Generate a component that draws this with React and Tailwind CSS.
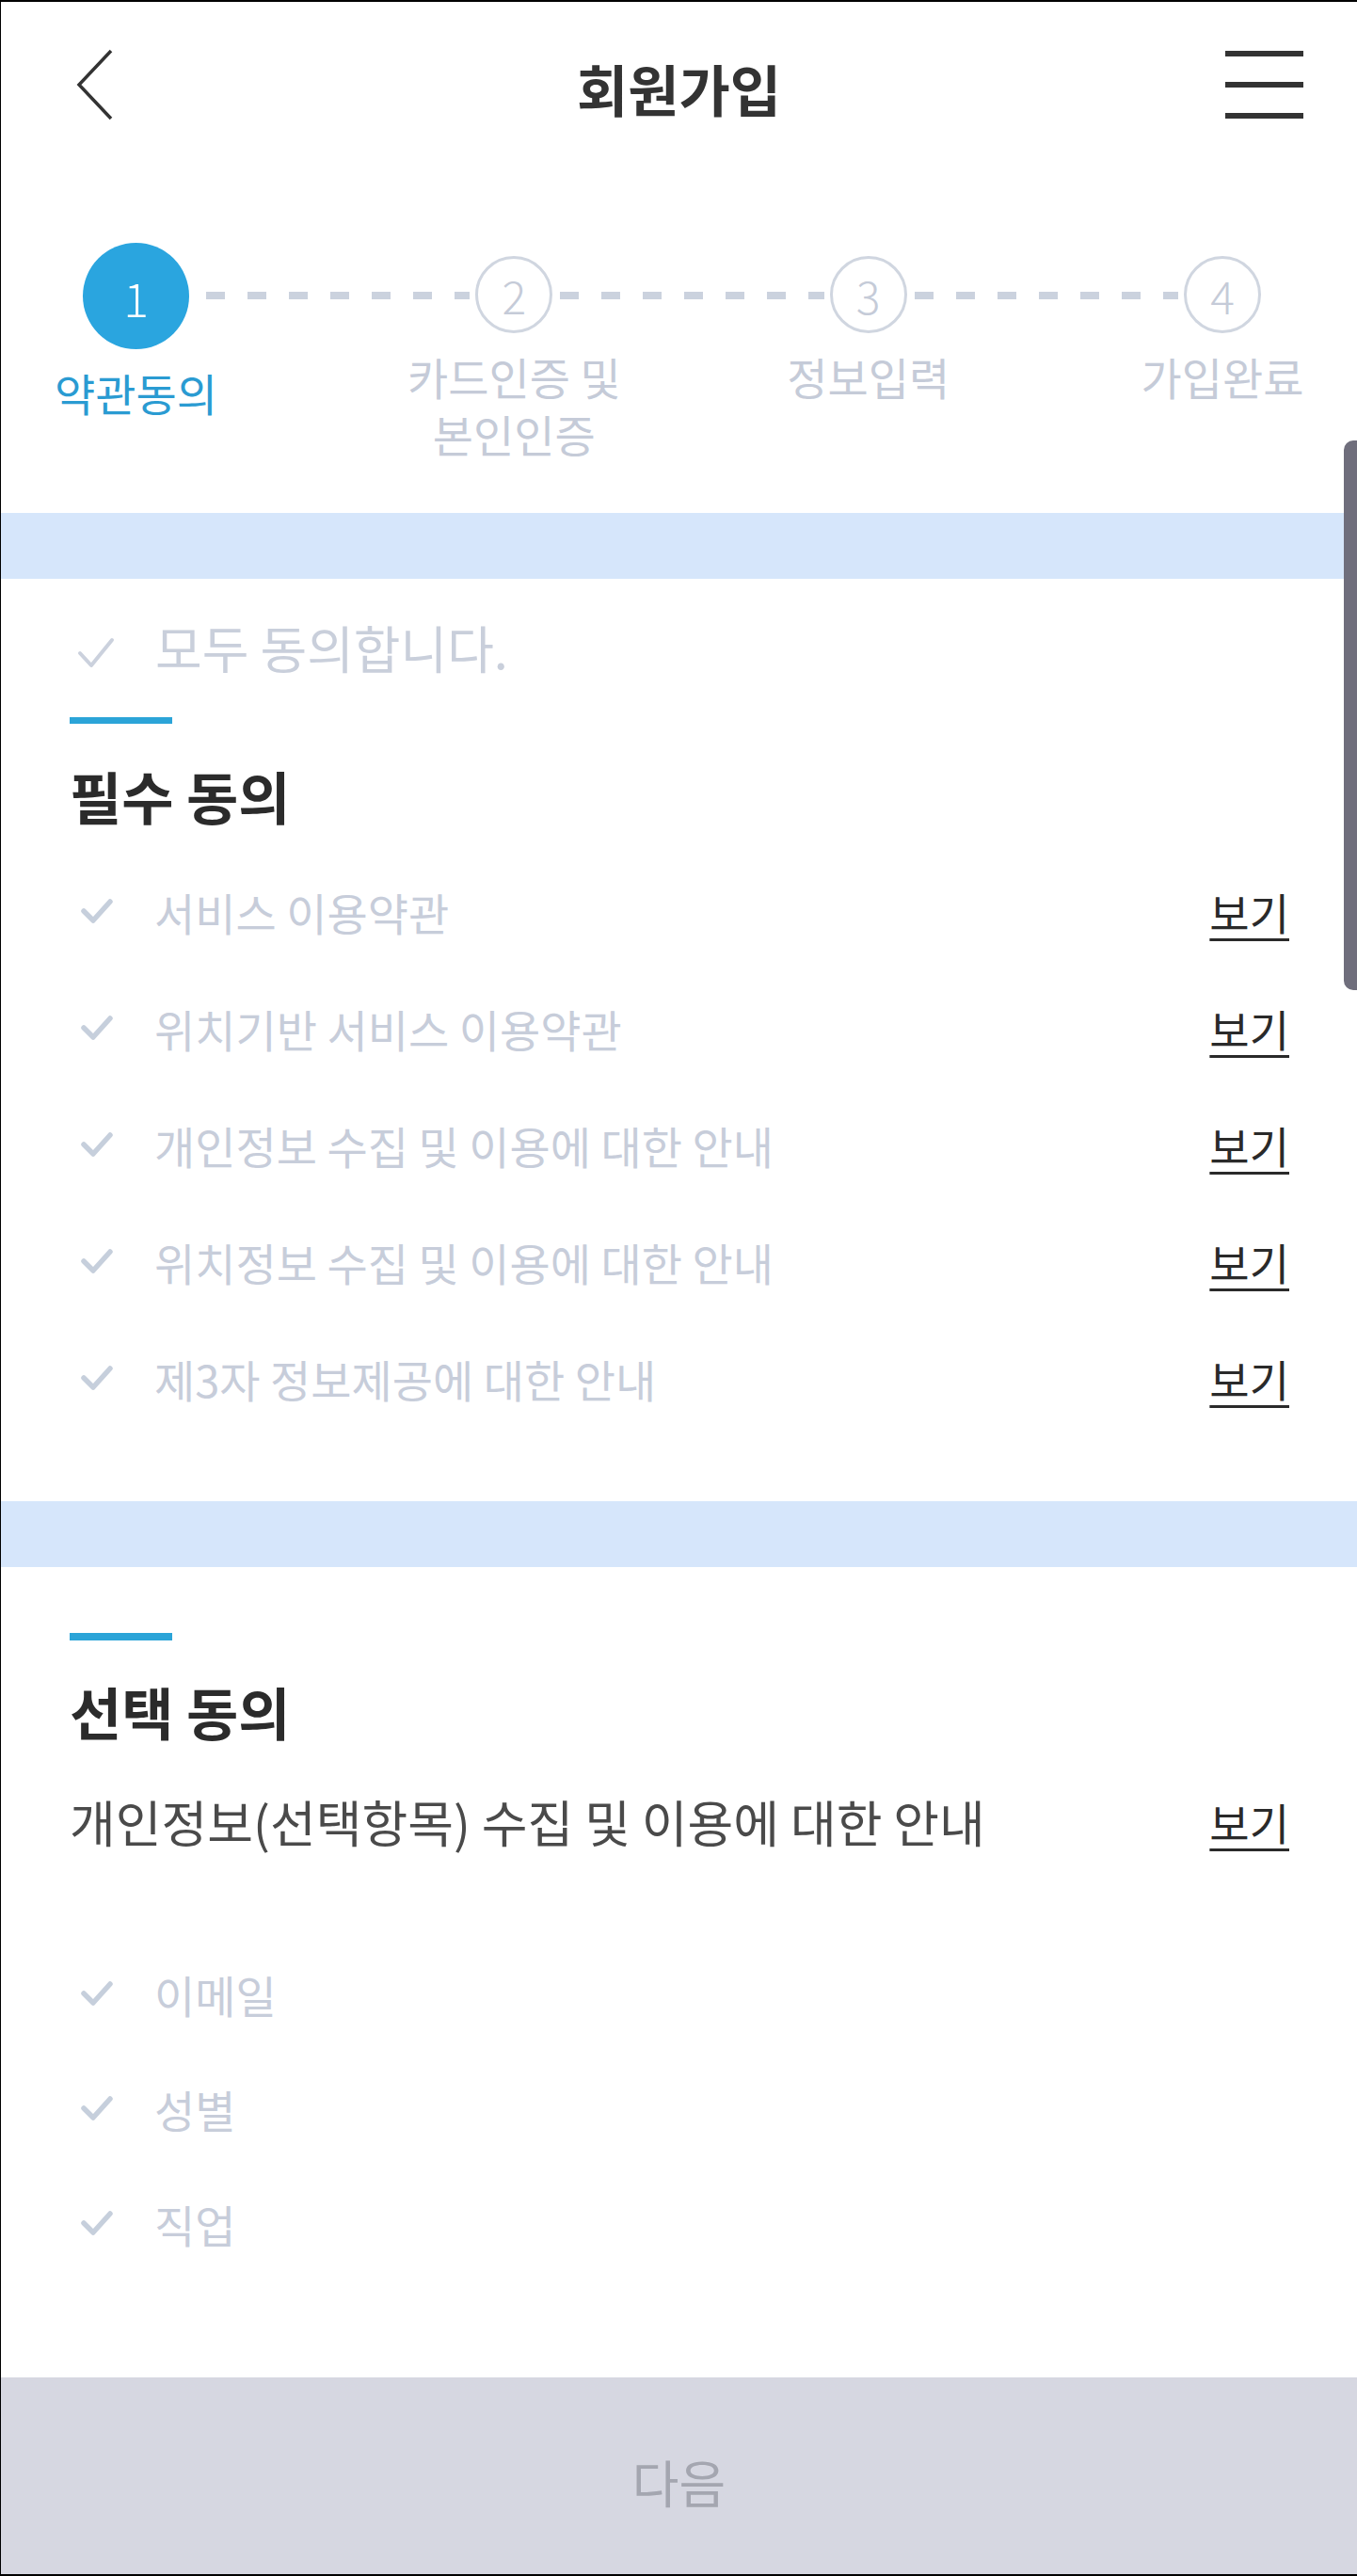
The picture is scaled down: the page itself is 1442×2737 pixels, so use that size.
const REQUIRED = [
  '서비스 이용약관',
  '위치기반 서비스 이용약관',
  '개인정보 수집 및 이용에 대한 안내',
  '위치정보 수집 및 이용에 대한 안내',
  '제3자 정보제공에 대한 안내',
]

const OPTIONAL = ['이메일', '성별', '직업']

const STEPS = [
  { num: '1', label: ['약관동의'] },
  { num: '2', label: ['카드인증 및', '본인인증'] },
  { num: '3', label: ['정보입력'] },
  { num: '4', label: ['가입완료'] },
]

export default function App() {
  return (
    <div
      className="relative flex h-[2737px] w-[1442px] flex-col overflow-hidden border-t-2 border-b-2 border-l border-black bg-white"
      style={{ fontFamily: '"Noto Sans CJK KR", "Noto Sans", sans-serif' }}
    >
      {/* header */}
      <header className="grid h-[176px] shrink-0 grid-cols-[1fr_auto_1fr] items-center px-[57px]">
        <div className="pl-[22px]">
          <svg width="40" height="76" viewBox="0 0 40 76" fill="none">
            <polyline points="38,2 4,38 38,74" stroke="#333" strokeWidth="3.5" />
          </svg>
        </div>
        <h1 className="pt-[6px] text-[59px] leading-none font-bold text-[#333]">회원가입</h1>
        <div className="flex justify-end">
          <div className="flex w-[83px] flex-col gap-[27px]">
            <span className="h-[6px] bg-[#333]" />
            <span className="h-[6px] bg-[#333]" />
            <span className="h-[6px] bg-[#333]" />
          </div>
        </div>
      </header>

      {/* stepper */}
      <section className="h-[367px] shrink-0 pt-[80px] pl-[87px] pr-[102px]">
        <div className="flex items-start">
          {STEPS.map((step, i) => (
            <Step key={step.num} step={step} index={i} last={i === STEPS.length - 1} />
          ))}
        </div>
      </section>

      <div className="h-[70px] shrink-0 bg-[#d6e6fb]" />

      {/* agree all */}
      <div className="mt-[38px] flex h-[70px] shrink-0 items-center pl-[81px]">
        <svg width="40" height="34" viewBox="0 0 40 34" fill="none" className="mt-[12px]">
          <polyline points="3,17 15,30 37,3" stroke="#cbd1dd" strokeWidth="4" strokeLinecap="round" strokeLinejoin="round" />
        </svg>
        <span className="ml-[43px] text-[54px] leading-none text-[#c9cfdb]">모두 동의합니다.</span>
      </div>

      <div className="mt-[39px] ml-[73px] h-[7px] w-[109px] shrink-0 bg-[#2ba4d8]" />
      <h2 className="mt-[46px] flex h-[60px] shrink-0 items-center pl-[73px] text-[60px] leading-none font-bold text-[#2b2b2b]">
        필수 동의
      </h2>

      <div className="mt-[31px] shrink-0">
        {REQUIRED.map((item) => (
          <CheckRow key={item} label={item} view />
        ))}
      </div>

      <div className="mt-[69px] h-[70px] shrink-0 bg-[#d6e6fb]" />

      <div className="mt-[70px] ml-[73px] h-[8px] w-[109px] shrink-0 bg-[#2ba4d8]" />
      <h2 className="mt-[45px] flex h-[60px] shrink-0 items-center pl-[73px] text-[60px] leading-none font-bold text-[#2b2b2b]">
        선택 동의
      </h2>

      <div className="mt-[57px] flex h-[60px] shrink-0 items-center justify-between pl-[73px] pr-[72px]">
        <span className="text-[53px] leading-none text-[#4a4a4a]">개인정보(선택항목) 수집 및 이용에 대한 안내</span>
        <ViewLink />
      </div>

      <div className="mt-[92px] shrink-0">
        {OPTIONAL.map((item) => (
          <CheckRow key={item} label={item} h="h-[122px]" />
        ))}
      </div>

      <button
        type="button"
        className="mt-auto flex h-[209px] shrink-0 items-center justify-center bg-[#d6d7e1] pt-[12px] text-[54px] leading-none text-[#a4a6b0]"
      >
        다음
      </button>

      {/* scrollbar overlay */}
      <div className="absolute top-[466px] right-0 h-[584px] w-[14px] rounded-l-[10px] bg-[#6f6e7c]" />
    </div>
  )
}

function Step({ step, index, last }) {
  const active = index === 0
  return (
    <>
      <div className={`flex shrink-0 flex-col items-center ${active ? 'w-[113px]' : 'mt-[14px] w-[82px]'}`}>
        {active ? (
          <div className="flex h-[113px] w-[113px] items-center justify-center rounded-full bg-[#2aa5df] text-[50px] leading-none font-light text-white">
            {step.num}
          </div>
        ) : (
          <div className="flex h-[82px] w-[82px] items-center justify-center rounded-full border-[3px] border-[#d0d6e0] text-[48px] leading-none font-light text-[#c5cbd8]">
            {step.num}
          </div>
        )}
        <div className={`mt-[22px] flex flex-col items-center gap-[14px] whitespace-nowrap text-[47px] leading-none ${active ? 'text-[#2a9bd2]' : 'text-[#c5cbd8]'}`}>
          {step.label.map((line) => (
            <div key={line} className="h-[47px]">{line}</div>
          ))}
        </div>
      </div>
      {!last && (
        <div className={`mt-[52px] h-[8px] flex-1 bg-[repeating-linear-gradient(90deg,#cbd2de_0_20px,transparent_20px_44px)] mr-[6px] ${active ? 'ml-[18px]' : 'ml-[8px]'}`} />
      )}
    </>
  )
}

function CheckRow({ label, view = false, h = 'h-[124px]' }) {
  return (
    <div className={`flex ${h} items-center pl-[84px] pr-[72px]`}>
      <svg width="36" height="28" viewBox="0 0 36 28" fill="none" className="shrink-0">
        <polyline points="4,14 14,24 32,4" stroke="#c6cfdc" strokeWidth="5.5" strokeLinecap="round" strokeLinejoin="round" />
      </svg>
      <span className="ml-[43px] flex-1 text-[47px] leading-none text-[#c7cdda]">{label}</span>
      {view && <ViewLink />}
    </div>
  )
}

function ViewLink() {
  return (
    <a className="text-[46px] leading-none text-[#2a2a2a] underline decoration-[3px] underline-offset-[9px]">
      보기
    </a>
  )
}
